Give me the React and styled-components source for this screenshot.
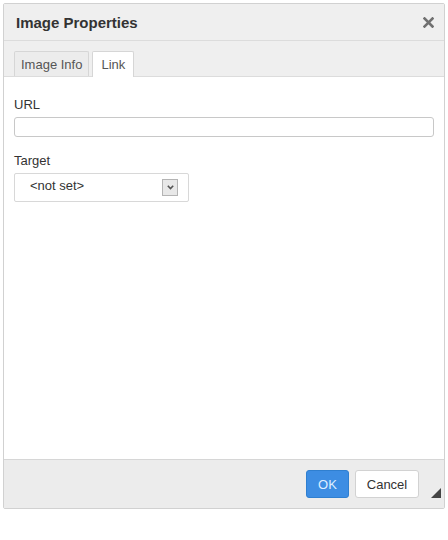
import styled, { createGlobalStyle } from 'styled-components';

const Global = createGlobalStyle`
    html, body {
        margin: 0;
        padding: 0;
        background: #ffffff;
    }
    body {
        padding: 3px 0 0 3px;
        font-family: 'Liberation Sans', Arial, sans-serif;
    }
`;

export default function App() {
    return (
        <>
            <Global />
            <Dialog>
                <TitleBar>
                    <Title>Image Properties</Title>
                    <Close>
                        <svg width="11" height="11" viewBox="0 0 11 11">
                            <path d="M1.5 1.5 L9.5 9.5 M9.5 1.5 L1.5 9.5" stroke="#707070" strokeWidth="2.6" strokeLinecap="square" />
                        </svg>
                    </Close>
                </TitleBar>
                <Tabs>
                    <Tab>Image Info</Tab>
                    <Tab active>Link</Tab>
                </Tabs>
                <Content>
                    <Field>
                        <Label>URL</Label>
                        <TextInput />
                    </Field>
                    <Field>
                        <Label>Target</Label>
                        <Select>
                            <span>&lt;not set&gt;</span>
                            <Arrow>
                                <svg width="7" height="5" viewBox="0 0 7 5">
                                    <path d="M0.8 0.8 L3.5 3.6 L6.2 0.8" stroke="#555" strokeWidth="1.6" fill="none" />
                                </svg>
                            </Arrow>
                        </Select>
                    </Field>
                </Content>
                <Footer>
                    <OkButton>OK</OkButton>
                    <CancelButton>Cancel</CancelButton>
                    <Resize />
                </Footer>
            </Dialog>
        </>
    );
}

const Dialog = styled.div`
    width: 440px;
    height: 504px;
    border: 1px solid #d1d1d1;
    border-radius: 2px;
    background: #ffffff;
    display: flex;
    flex-direction: column;
    box-sizing: content-box;
`;

const TitleBar = styled.div`
    height: 36px;
    display: flex;
    align-items: center;
    justify-content: space-between;
    padding: 0 10px 0 12px;
    background: #efefef;
    border-bottom: 1px solid #dcdcdc;
`;

const Title = styled.h1`
    margin: 0;
    font-size: 15px;
    font-weight: 700;
    color: #333333;
`;

const Close = styled.div`
    display: flex;
    align-items: center;
`;

const Tabs = styled.div`
    height: 35px;
    display: flex;
    align-items: flex-end;
    gap: 3px;
    padding: 0 0 0 10px;
    background: #efefef;
    border-bottom: 1px solid #dcdcdc;
`;

const Tab = styled.div`
    padding: 0 ${(props) => (props.active ? '8px' : '6px')};
    display: flex;
    align-items: center;
    font-size: 13px;
    color: #555555;
    border: 1px solid #d6d6d6;
    border-bottom: none;
    border-radius: 2px 2px 0 0;
    background: ${(props) => (props.active ? '#ffffff' : '#ececec')};
    margin-bottom: ${(props) => (props.active ? '-1px' : '0')};
    height: ${(props) => (props.active ? '25px' : '24px')};
`;

const Content = styled.div`
    flex: 1;
    padding: 20px 10px 0 10px;
    display: flex;
    flex-direction: column;
    gap: 16px;
`;

const Field = styled.div`
    display: flex;
    flex-direction: column;
    align-items: flex-start;
`;

const Label = styled.label`
    font-size: 13px;
    color: #333333;
    margin-bottom: 5px;
`;

const TextInput = styled.div`
    width: 418px;
    height: 18px;
    border: 1px solid #c8c8c8;
    border-radius: 3px;
    background: #ffffff;
`;

const Select = styled.div`
    width: 148px;
    height: 27px;
    border: 1px solid #d8d8d8;
    border-radius: 2px;
    display: flex;
    align-items: center;
    justify-content: space-between;
    padding: 0 10px 0 15px;
    font-size: 13px;
    color: #333333;
    span {
        margin-top: -4px;
    }
`;

const Arrow = styled.div`
    width: 14px;
    height: 15px;
    border: 1px solid #b4b4b4;
    background: #e8e8e8;
    display: flex;
    align-items: center;
    justify-content: center;
`;

const Footer = styled.div`
    height: 48px;
    background: #ececec;
    border-top: 1px solid #d6d6d6;
    display: flex;
    align-items: center;
    justify-content: flex-end;
    gap: 6px;
    padding: 0 25px 0 0;
    position: relative;
`;

const OkButton = styled.button`
    width: 43px;
    height: 28px;
    border: 1px solid #2f7fd0;
    border-radius: 3px;
    background: #3d8de3;
    color: #dfeeff;
    font-family: 'Liberation Sans', Arial, sans-serif;
    font-size: 13px;
    padding: 0;
`;

const CancelButton = styled.button`
    width: 64px;
    height: 28px;
    border: 1px solid #d2d2d2;
    border-radius: 3px;
    background: #ffffff;
    color: #333333;
    font-family: 'Liberation Sans', Arial, sans-serif;
    font-size: 13px;
    padding: 0;
`;

const Resize = styled.div`
    position: absolute;
    right: 3px;
    bottom: 10px;
    width: 0;
    height: 0;
    border-left: 10px solid transparent;
    border-bottom: 10px solid #444444;
`;
